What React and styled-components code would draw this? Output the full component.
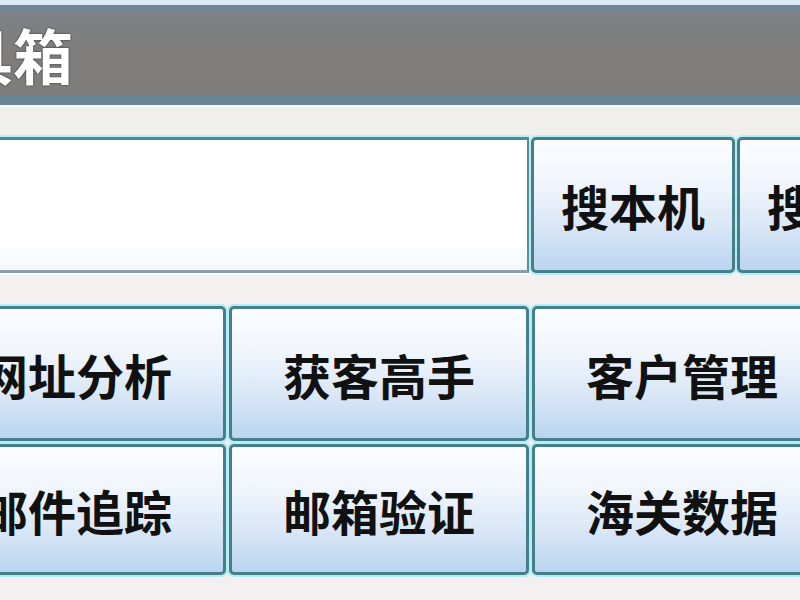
import React from 'react';
import styled, { createGlobalStyle } from 'styled-components';

const GlobalStyle = createGlobalStyle`
  html, body {
    margin: 0;
    padding: 0;
    background: #f3f0ef;
    overflow: hidden;
  }
  * {
    box-sizing: border-box;
  }
`;

const Frame = styled.div`
  width: 800px;
  height: 600px;
  overflow: hidden;
  background: #f4eff0;
  font-family: "Noto Sans CJK SC", "Noto Sans", sans-serif;
`;

const TopStrip = styled.div`
  height: 5px;
  background: #d9eaf2;
`;

const TitleBar = styled.div`
  height: 100px;
  display: flex;
  align-items: center;
  background: linear-gradient(to bottom, #7b8287 0%, #807e7d 45%, #7f7d7b 100%);
  border-top: 6px solid #6e8697;
  border-bottom: 9px solid #6b8495;
  overflow: hidden;
`;

const Title = styled.h1`
  margin: 0 0 0 -107px;
  font-size: 60px;
  font-weight: 600;
  line-height: 1;
  color: #ffffff;
  white-space: nowrap;
  text-shadow: 0 0 2px #2f3438, 0 0 1px #2f3438;
`;

const Spacer = styled.div`
  height: ${p => p.$h}px;
  background: ${p => p.$bg || '#f0efeb'};
  border-top: 2px solid #f8fbfc;
`;

const SearchRow = styled.div`
  display: grid;
  grid-template-columns: 629px 204px 204px;
  gap: 2px;
  height: 136px;
  margin-left: -100px;
  width: 1041px;
`;

const SearchInput = styled.input`
  height: 100%;
  border: none;
  border-top: 3px solid #4c8a94;
  border-bottom: 3px solid #8e9ea4;
  border-right: 2px solid #5a8f98;
  box-shadow: 0 -2px 0 #b8f1f8;
  background: linear-gradient(to bottom, #ffffff 0%, #ffffff 80%, #f2f8fc 100%);
  outline: none;
  font-size: 40px;
  font-family: inherit;
`;

const Btn = styled.button`
  height: 100%;
  border: 3px solid #467f8a;
  border-radius: 5px;
  box-shadow: 0 0 0 2px #b3eef6;
  background: linear-gradient(to bottom, #fbfdff 0%, #f0f5fc 35%, #d8e6f6 68%, #b9d5f1 100%);
  color: #111;
  font-family: inherit;
  font-size: 48px;
  font-weight: 600;
  line-height: 1;
  padding: 0;
  white-space: nowrap;
  overflow: hidden;
  cursor: pointer;
`;

const ToolGrid = styled.div`
  display: grid;
  grid-template-columns: repeat(3, 300px);
  grid-template-rows: 135px 131px;
  gap: 3px;
  margin-left: -74px;
  width: 906px;
`;

const tools = ['网址分析', '获客高手', '客户管理', '邮件追踪', '邮箱验证', '海关数据'];

export default function App() {
  return (
    <Frame>
      <GlobalStyle />
      <TopStrip />
      <TitleBar>
        <Title>工具箱</Title>
      </TitleBar>
      <Spacer $h={32} />
      <SearchRow>
        <SearchInput type="text" />
        <Btn>搜本机</Btn>
        <Btn>搜网络</Btn>
      </SearchRow>
      <Spacer $h={33} $bg="#f4f0f0" />
      <ToolGrid>
        {tools.map(t => (
          <Btn key={t}>{t}</Btn>
        ))}
      </ToolGrid>
    </Frame>
  );
}
